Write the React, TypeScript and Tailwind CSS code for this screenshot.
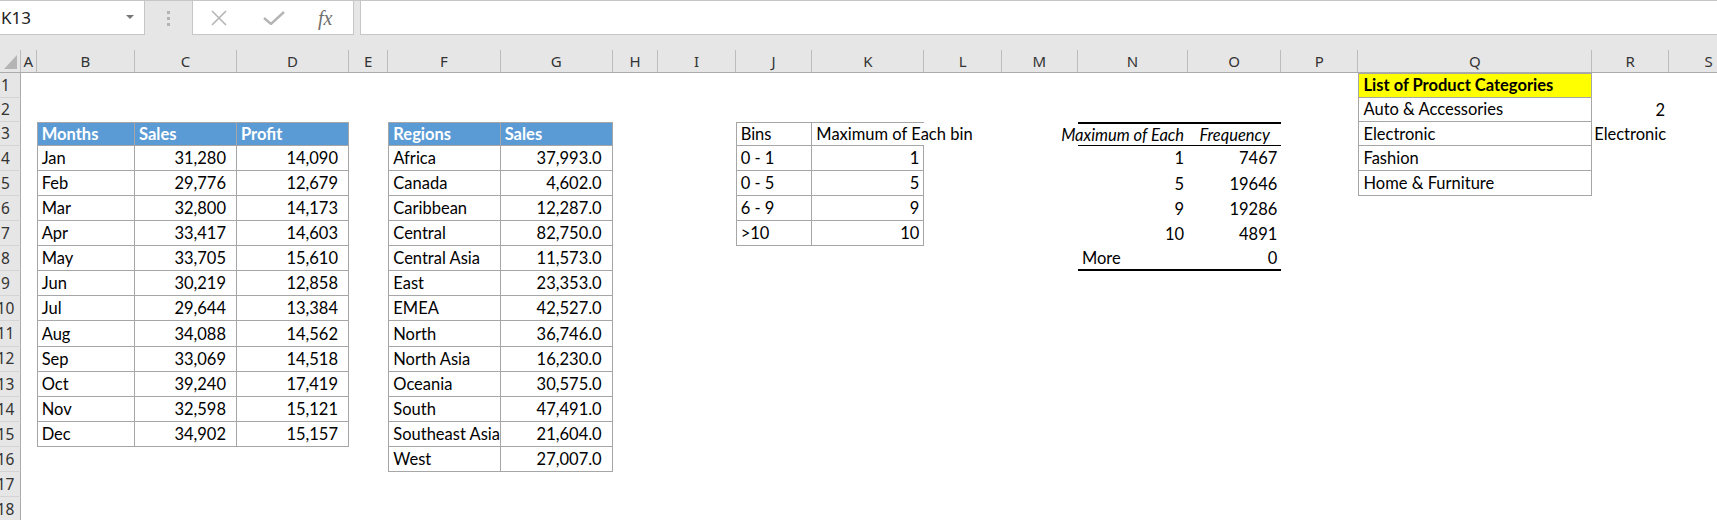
import React from "react";

type Cell = { v?: string; align?: "l" | "r" | "rn" | "c"; cls?: string };

const COLS = ["A", "B", "C", "D", "E", "F", "G", "H", "I", "J", "K", "L", "M", "N", "O", "P", "Q", "R", "S"];
const ROWS = Array.from({ length: 18 }, (_, i) => i + 1);

const months = [
  ["Jan", "31,280", "14,090"],
  ["Feb", "29,776", "12,679"],
  ["Mar", "32,800", "14,173"],
  ["Apr", "33,417", "14,603"],
  ["May", "33,705", "15,610"],
  ["Jun", "30,219", "12,858"],
  ["Jul", "29,644", "13,384"],
  ["Aug", "34,088", "14,562"],
  ["Sep", "33,069", "14,518"],
  ["Oct", "39,240", "17,419"],
  ["Nov", "32,598", "15,121"],
  ["Dec", "34,902", "15,157"],
];

const regions = [
  ["Africa", "37,993.0"],
  ["Canada", "4,602.0"],
  ["Caribbean", "12,287.0"],
  ["Central", "82,750.0"],
  ["Central Asia", "11,573.0"],
  ["East", "23,353.0"],
  ["EMEA", "42,527.0"],
  ["North", "36,746.0"],
  ["North Asia", "16,230.0"],
  ["Oceania", "30,575.0"],
  ["South", "47,491.0"],
  ["Southeast Asia", "21,604.0"],
  ["West", "27,007.0"],
];

const bins = [
  ["0 - 1", "1"],
  ["0 - 5", "5"],
  ["6 - 9", "9"],
  [">10", "10"],
];

const freq = [
  ["1", "7467"],
  ["5", "19646"],
  ["9", "19286"],
  ["10", "4891"],
];

const categories = ["Auto & Accessories", "Electronic", "Fashion", "Home & Furniture"];

const cells: Record<string, Cell> = {};

// thin grey box border around a block of cells
function box(c1: string, c2: string, r1: number, r2: number) {
  const a = COLS.indexOf(c1);
  const b = COLS.indexOf(c2);
  for (let c = a; c <= b; c++) {
    for (let r = r1; r <= r2; r++) {
      const key = COLS[c] + r;
      let cls = "border-[#a6a6a6] border-r border-b";
      if (c === a) cls += " border-l";
      if (r === r1) cls += " border-t";
      cells[key] = { ...(cells[key] ?? {}), cls: cls + " " + (cells[key]?.cls ?? "") };
    }
  }
}

const set = (key: string, c: Cell) => {
  cells[key] = { ...(cells[key] ?? {}), ...c, cls: (cells[key]?.cls ?? "") + " " + (c.cls ?? "") };
};

// months table
box("B", "D", 3, 15);
["Months", "Sales", "Profit"].forEach((h, i) =>
  set(COLS[1 + i] + 3, { v: h, align: "l", cls: "bg-[#5b9bd5] font-bold text-white" })
);
months.forEach((m, i) => {
  set("B" + (4 + i), { v: m[0], align: "l" });
  set("C" + (4 + i), { v: m[1], align: "rn" });
  set("D" + (4 + i), { v: m[2], align: "rn" });
});

// regions table
box("F", "G", 3, 16);
set("F3", { v: "Regions", align: "l", cls: "bg-[#5b9bd5] font-bold text-white" });
set("G3", { v: "Sales", align: "l", cls: "bg-[#5b9bd5] font-bold text-white" });
regions.forEach((m, i) => {
  set("F" + (4 + i), { v: m[0], align: "l" });
  set("G" + (4 + i), { v: m[1], align: "rn" });
});

// bins table
box("J", "K", 3, 7);
set("J3", { v: "Bins", align: "l" });
set("K3", { v: "Maximum of Each bin", align: "l", cls: "!border-r-0" });
bins.forEach((b, i) => {
  set("J" + (4 + i), { v: b[0], align: "l" });
  set("K" + (4 + i), { v: b[1], align: "r" });
});

// frequency output
set("N3", { v: "Maximum of Each", align: "r", cls: "italic border-black border-t-2 border-b" });
set("O3", { v: "Frequency", align: "c", cls: "italic border-black border-t-2 border-b" });
freq.forEach((f, i) => {
  set("N" + (4 + i), { v: f[0], align: "r" });
  set("O" + (4 + i), { v: f[1], align: "r" });
});
set("N8", { v: "More", align: "l", cls: "border-black border-b-2" });
set("O8", { v: "0", align: "r", cls: "border-black border-b-2" });

// product categories
box("Q", "Q", 1, 5);
set("Q1", { v: "List of Product Categories", align: "l", cls: "bg-[#ffff00] font-bold" });
categories.forEach((c, i) => set("Q" + (2 + i), { v: c, align: "l" }));
set("R2", { v: "2", align: "r" });
set("R3", { v: "Electronic", align: "l", cls: "!pl-[2px]" });

const alignCls = {
  l: "justify-start pl-[4px]",
  r: "justify-end pr-[4px]",
  rn: "justify-end pr-[10px]",
  c: "justify-center",
};

const colTemplate =
  "grid-cols-[20.7px_16px_98.3px_102px_112px_39.3px_112.4px_112px_45.6px_77.4px_76.7px_112.1px_77.3px_76.2px_110.2px_93.2px_77.2px_233.7px_77px_80px]";

function FormulaBar() {
  return (
    <div className="flex h-[50px] items-start border-t border-[#c6c6c6] bg-[#e6e6e6]">
      <div className="flex h-[34px] w-[145px] items-center justify-between border-r border-b border-[#c6c6c6] bg-white pl-[1px] pr-[10px] text-[17px] text-[#222]">
        <span>K13</span>
        <svg width="8" height="5" viewBox="0 0 8 5">
          <path d="M0 0 L8 0 L4 4 Z" fill="#777" />
        </svg>
      </div>
      <div className="flex h-[34px] w-[47px] flex-col items-center justify-center gap-[3px]">
        <span className="h-[3px] w-[3px] bg-[#b3b3b3]" />
        <span className="h-[3px] w-[3px] bg-[#b3b3b3]" />
        <span className="h-[3px] w-[3px] bg-[#b3b3b3]" />
      </div>
      <div className="flex h-[34px] w-[162px] items-center border border-t-0 border-[#c6c6c6] bg-white">
        <svg className="ml-[17px]" width="18" height="16" viewBox="0 0 18 16">
          <path d="M2 1 L16 15 M16 1 L2 15" stroke="#b5b5b5" strokeWidth="1.6" />
        </svg>
        <svg className="ml-[35px]" width="22" height="14" viewBox="0 0 22 14">
          <path d="M1 7 L8 13 L21 1" stroke="#b5b5b5" strokeWidth="2.4" fill="none" />
        </svg>
        <span className="ml-[33px] font-['Liberation_Serif',serif] text-[20px] italic leading-none text-[#6f6f6f]">
          fx
        </span>
      </div>
      <div className="ml-[6px] h-[34px] flex-1 border-b border-l border-[#c6c6c6] bg-white" />
    </div>
  );
}

function ColumnHeaders() {
  return (
    <div className={`grid h-[23px] ${colTemplate} border-b border-[#ababab] bg-[#e6e6e6] text-[15px] text-[#333]`}>
      <div className="flex items-end justify-end border-r border-[#bcbcbc] pr-[3px] pb-[3px]">
        <svg width="13" height="14" viewBox="0 0 13 14">
          <path d="M13 0 L13 14 L0 14 Z" fill="#b5b5b5" />
        </svg>
      </div>
      {COLS.map((c) => (
        <div key={c} className="flex items-center justify-center border-r border-[#bcbcbc] leading-none">
          {c}
        </div>
      ))}
    </div>
  );
}

function Sheet() {
  return (
    <div
      className={`grid ${colTemplate} grid-rows-[24.6px_24.6px_23.6px_repeat(15,25.1px)] font-['Lato',sans-serif] text-[16.5px] text-black`}
    >
      {ROWS.map((r) => (
        <React.Fragment key={r}>
          {/* row header is scrolled a bit, so the left part of the number is clipped */}
          <div className="flex overflow-hidden border-r border-b border-r-[#ababab] border-b-[#d4d4d4] bg-[#e6e6e6] font-['Noto_Sans',sans-serif] text-[15.5px] text-[#333]">
            <div className="flex w-[11px] shrink-0 items-center justify-center pt-[1px]">{r}</div>
          </div>
          {COLS.map((c) => {
            const cell = cells[c + r] ?? {};
            const a = cell.align ? alignCls[cell.align] : "";
            return (
              <div
                key={c + r}
                className={`flex min-w-0 items-center whitespace-nowrap pt-[2px] leading-[1.2] ${a} ${cell.cls ?? ""}`}
              >
                {cell.v}
              </div>
            );
          })}
        </React.Fragment>
      ))}
    </div>
  );
}

export default function App() {
  return (
    <div className="h-[520px] w-[1717px] overflow-hidden bg-white font-['Noto_Sans',sans-serif]">
      <FormulaBar />
      <ColumnHeaders />
      <Sheet />
    </div>
  );
}
